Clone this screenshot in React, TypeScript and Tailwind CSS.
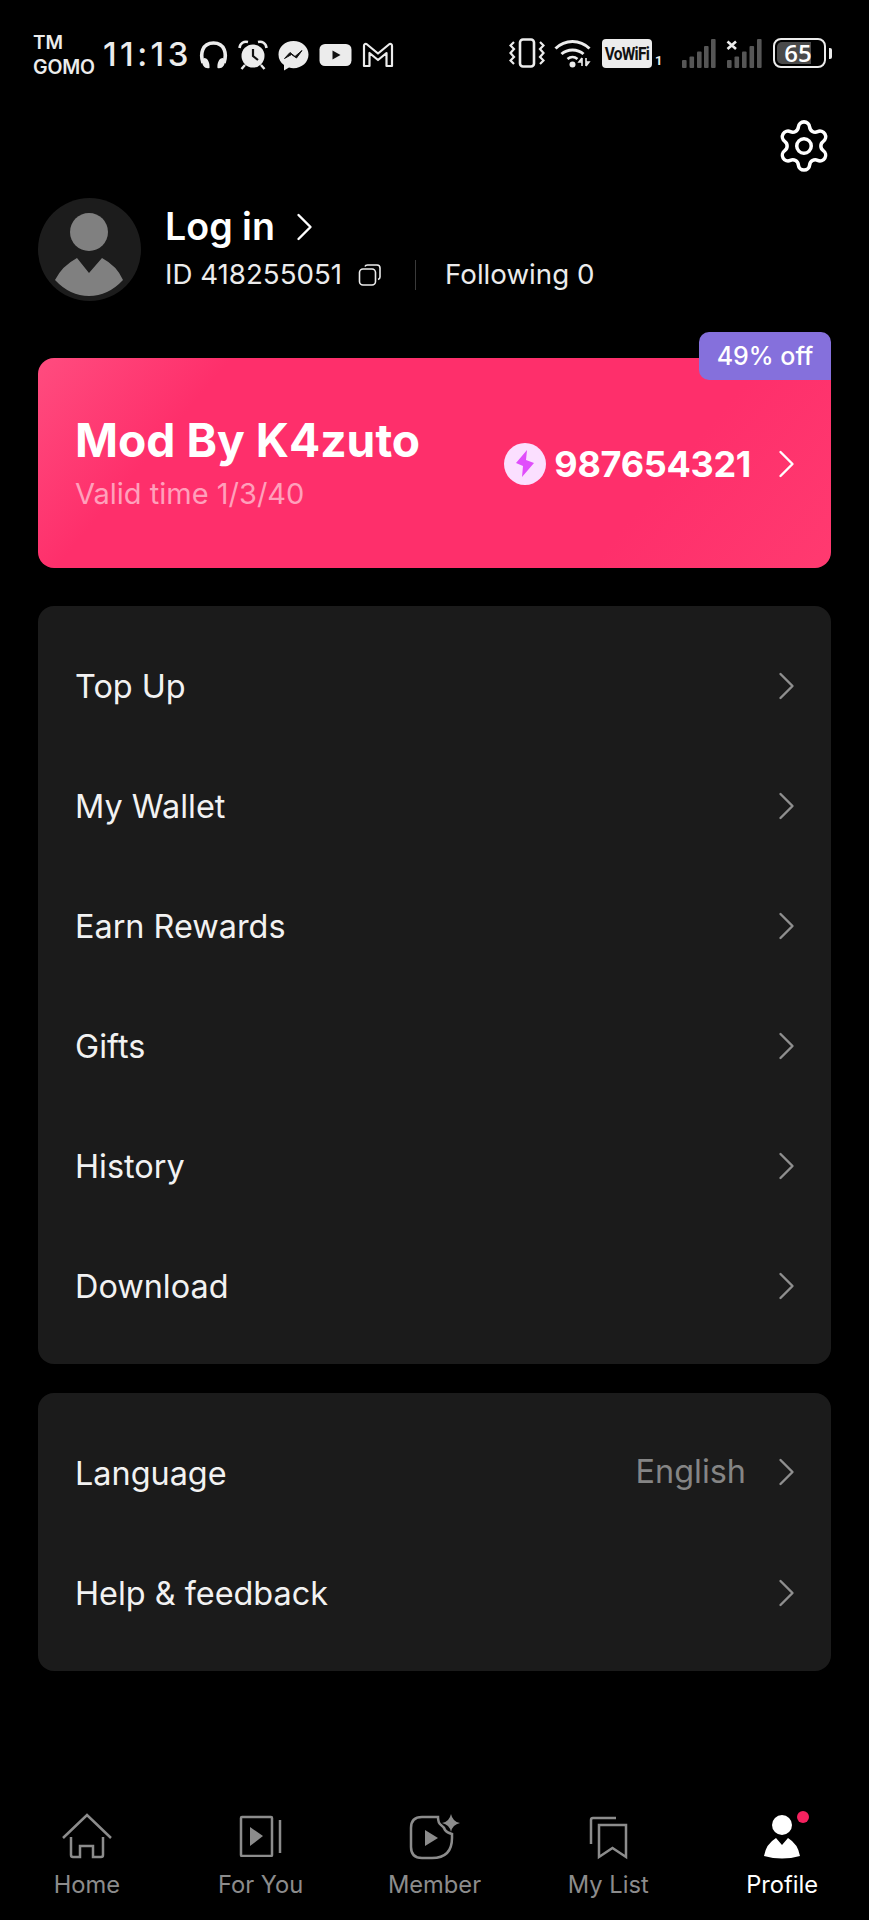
import { Settings } from "lucide-react";
import type { ReactNode } from "react";

const FONT = "font-['Inter','Noto_Sans',sans-serif]";

const MENU_ONE = ["Top Up", "My Wallet", "Earn Rewards", "Gifts", "History", "Download"];

function Chevron({ className = "text-[#8f8f8f]" }: { className?: string }) {
    return (
        <svg width="17" height="28" viewBox="0 0 17 28" fill="none" className={className}>
            <path d="M2.5 2 L14.5 14 L2.5 26" stroke="currentColor" strokeWidth="2.4" strokeLinecap="round" strokeLinejoin="round" />
        </svg>
    );
}

function MenuRow({ label, value }: { label: string; value?: string }) {
    return (
        <div className="h-[120px] pl-[38px] pr-[36px] flex items-center justify-between">
            <span className="text-[32.4px] text-[#f2f2f2] -ml-[1px]">{label}</span>
            <div className="flex items-center gap-[32px] -mt-[3px]">
                {value && <span className="text-[32.4px] text-[#858585]">{value}</span>}
                <Chevron />
            </div>
        </div>
    );
}

function StatusLeftIcons() {
    return (
        <div className="flex items-center gap-[10px] text-[#ececec]">
            {/* headphones */}
            <svg width="29" height="30" viewBox="0 0 29 30" fill="none">
                <path d="M4 23 C1 14 3 3 14.5 3 C26 3 28 14 25 23" stroke="currentColor" strokeWidth="3.6" />
                <path d="M5 18 C9 18 11 23 10.5 28 C6 29 3 26 3 20 Z M24 18 C20 18 18 23 18.5 28 C23 29 26 26 26 20 Z" fill="currentColor" />
            </svg>
            {/* alarm */}
            <svg width="30" height="30" viewBox="0 0 30 30" fill="none">
                <circle cx="15" cy="16" r="11.5" fill="currentColor" />
                <path d="M15 9 V16 L20 20" stroke="#111" strokeWidth="2.2" />
                <path d="M1.5 8 C2 3 6 1 10 2 M28.5 8 C28 3 24 1 20 2" stroke="currentColor" strokeWidth="2.6" />
                <path d="M7 25 L3.5 29 M23 25 L26.5 29" stroke="currentColor" strokeWidth="2.4" />
            </svg>
            {/* messenger */}
            <svg width="31" height="31" viewBox="0 0 31 31" fill="none">
                <path d="M15.5 1 C7 1 0.5 7 0.5 14.5 C0.5 19 2.5 22.5 6 25 V30.5 L11 27.5 C12.5 28 14 28.2 15.5 28.2 C24 28.2 30.5 22 30.5 14.5 C30.5 7 24 1 15.5 1 Z" fill="currentColor" />
                <path d="M6.5 18.5 L12 12.5 L17 16.5 L24 10.5 L18.5 18 L13.5 14.5 Z" fill="#111" stroke="#111" strokeWidth="1" />
            </svg>
            {/* youtube */}
            <svg width="33" height="24" viewBox="0 0 33 24" fill="none">
                <rect x="0.5" y="1" width="32" height="22" rx="5.5" fill="currentColor" />
                <path d="M13.5 7.5 L21.5 12 L13.5 16.5 Z" fill="#111" />
            </svg>
            {/* gmail */}
            <svg width="32" height="26" viewBox="0 0 32 26" fill="none">
                <path d="M2 24 V4 Q2 1.5 4.5 2 L16 11.5 L27.5 2 Q30 1.5 30 4 V24 H24.5 V11 L16 18 L7.5 11 V24 Z" stroke="currentColor" strokeWidth="2.2" strokeLinejoin="round" />
            </svg>
        </div>
    );
}

function SignalBars({ xs, crossed }: { xs: number[]; crossed?: boolean }) {
    const tops = [22, 18.5, 13.5, 8, 1];
    return (
        <svg width="36" height="30" viewBox="0 0 36 30" fill="#565656">
            {xs.map((x, i) => (
                <rect key={x} x={x} y={tops[i]} width="4.6" height={30 - tops[i]} rx="1" />
            ))}
            {crossed && <path d="M1.5 3.5 L10 11 M10 3.5 L1.5 11" stroke="#ececec" strokeWidth="2.6" />}
        </svg>
    );
}

function StatusRightIcons() {
    return (
        <div className="flex items-center text-[#ececec]">
            {/* vibrate */}
            <svg width="36" height="30" viewBox="0 0 36 30" fill="none" className="mr-[9px]">
                <rect x="11" y="1.5" width="14" height="27" rx="3" stroke="currentColor" strokeWidth="2.6" />
                <path d="M5 4 L1.5 7.5 L5 11 L1.5 15 L5 19 L1.5 22.5 L5 26 M31 4 L34.5 7.5 L31 11 L34.5 15 L31 19 L34.5 22.5 L31 26" stroke="currentColor" strokeWidth="2.2" />
            </svg>
            {/* wifi */}
            <svg width="38" height="30" viewBox="0 0 38 30" fill="none" className="mr-[10px]">
                <path d="M1.5 10.5 C11 1 26 1 35.5 10.5" stroke="currentColor" strokeWidth="3" />
                <path d="M7.5 16 C13.5 10.5 23.5 10.5 29.5 16" stroke="currentColor" strokeWidth="3" />
                <path d="M13.5 21 C16.5 18.5 20.5 18.5 23.5 21" stroke="currentColor" strokeWidth="2.6" />
                <circle cx="18.5" cy="26.5" r="3" fill="currentColor" />
                <path d="M28 20 V28 M28 20 L25 24 H28 M32 28 V20 M32 28 L35 24 H32" stroke="currentColor" strokeWidth="1.6" />
            </svg>
            <div className="w-[50px] h-[29px] rounded-[4px] bg-[#ececec] flex items-center justify-center overflow-hidden">
                <span className="font-['Roboto',sans-serif] font-bold text-[18px] text-[#111] tracking-[-0.8px] scale-x-[0.86] whitespace-nowrap">VoWiFi</span>
            </div>
            <span className="font-['Roboto',sans-serif] font-bold text-[13px] self-end ml-[3px] w-[26px] leading-[14px]">1</span>
            <div className="mr-[9px]"><SignalBars xs={[1, 8.5, 16, 23, 30]} /></div>
            <div className="mr-[11px]"><SignalBars xs={[1, 8.5, 16, 23.5, 31]} crossed /></div>
            {/* battery */}
            <div className="relative w-[53px] h-[30px] rounded-[8px] border-2 border-[#ececec] flex items-center justify-center">
                <div className="absolute left-[2px] top-[2px] bottom-[2px] w-[34px] rounded-l-[5px] bg-[#4a4a4a]" />
                <span className="relative font-['Open_Sans',sans-serif] font-semibold text-[24px] leading-none text-white -ml-[3px]">65</span>
            </div>
            <div className="w-[3px] h-[11px] ml-[3px] rounded-r-[2px] bg-[#ececec]" />
        </div>
    );
}

function StatusBar() {
    return (
        <div className="h-[110px] pt-[30px] pl-[33px] pr-[37px] flex items-start justify-between">
            <div className="flex items-center h-[50px]">
                <div className="w-[70px] flex flex-col text-[#ececec] font-semibold">
                    <span className="text-[19px] leading-[24px]">TM</span>
                    <span className="text-[19.5px] leading-[24px] tracking-[-0.2px]">GOMO</span>
                </div>
                <span className="text-[33px] font-medium text-[#ececec] tracking-[3.4px] w-[96px]">11:13</span>
                <StatusLeftIcons />
            </div>
            <div className="h-[50px] flex items-center -mt-[2px]">
                <StatusRightIcons />
            </div>
        </div>
    );
}

function Avatar() {
    return (
        <svg width="103" height="103" viewBox="0 0 103 103" className="shrink-0">
            <circle cx="51.5" cy="51.5" r="51.5" fill="#1c1c1c" />
            <circle cx="51" cy="34" r="19" fill="#808080" />
            <path d="M17 82 Q24 68 39 60 L51 75 L64 60 Q79 68 85 82 Q70 98 51 98 Q32 98 17 82 Z" fill="#808080" />
        </svg>
    );
}

function ProfileHeader() {
    return (
        <div className="flex items-center gap-[24px]">
            <Avatar />
            <div className="flex flex-col pt-[2px]">
                <div className="flex items-center h-[48px] gap-[21px]">
                    <span className="text-[37.6px] font-semibold text-white">Log in</span>
                    <Chevron className="text-white" />
                </div>
                <div className="flex items-center h-[46px] mt-[1px] text-[27.7px] text-[#ececec]">
                    <span>ID 418255051</span>
                    <svg width="24" height="24" viewBox="0 0 24 24" fill="none" className="ml-[16px]">
                        <rect x="1.5" y="6" width="16" height="16" rx="3.5" stroke="currentColor" strokeWidth="1.6" />
                        <path d="M7 3.5 Q7.5 2 9.5 2 H19 Q22 2 22 5 V14 Q22 16 20 16.5" stroke="currentColor" strokeWidth="1.6" />
                    </svg>
                    <div className="w-px h-[30px] bg-[#3a3a3a] ml-[33px] mr-[29px]" />
                    <span>Following 0</span>
                </div>
            </div>
        </div>
    );
}

function VipCard() {
    return (
        <div className="relative h-[210px] mt-[57px] rounded-[16px] pl-[37px] pr-[36px] flex items-center justify-between bg-[linear-gradient(130deg,#ff4c7f_0%,#fe2f6b_20%,#fe2f6b_75%,#ff3a70_100%)]">
            <div className="absolute -top-[26px] right-0 w-[132px] h-[48px] rounded-t-[10px] rounded-bl-[10px] bg-[#8570dc] flex items-center justify-center text-[25px] font-medium text-white pt-[1px]">
                49% off
            </div>
            <div className="flex flex-col -mt-[2px]">
                <span className="text-[46.2px] leading-[54px] font-bold text-white">Mod By K4zuto</span>
                <span className="text-[29px] leading-[36px] text-[#ffa0bb] mt-[9px]">Valid time 1/3/40</span>
            </div>
            <div className="flex items-center mt-[1px]">
                <div className="w-[42px] h-[42px] rounded-full bg-[#fbdfff] flex items-center justify-center">
                    <svg width="20" height="29" viewBox="0 0 20 29">
                        <path d="M12 1 L1 14 L8 17 L7 28 L19 14 L11 11 Z" fill="#e04dfb" />
                    </svg>
                </div>
                <span className="ml-[8px] text-[36px] font-bold text-white tracking-[-0.3px]">987654321</span>
                <div className="ml-[27px] flex"><Chevron className="text-white" /></div>
            </div>
        </div>
    );
}

function NavItem({ label, active, icon }: { label: string; active?: boolean; icon: ReactNode }) {
    return (
        <div className={`flex flex-col items-center ${active ? "text-white" : "text-[#8c8c8c]"}`}>
            <div className="h-[52px] flex items-center justify-center">{icon}</div>
            <span className="text-[23.7px] leading-[30px] mt-[8px]">{label}</span>
        </div>
    );
}

function BottomNav() {
    return (
        <div className="grid grid-cols-5 h-[110px]">
            <NavItem
                label="Home"
                icon={
                    <svg width="50" height="46" viewBox="0 0 50 46" fill="none" stroke="currentColor" strokeWidth="2.5">
                        <path d="M1 25 L25 2 L49 25" />
                        <path d="M9 24 V42 Q9 44 11 44 H18 V33 H31 V44 H39 Q41 44 41 42 V24" />
                    </svg>
                }
            />
            <NavItem
                label="For You"
                icon={
                    <svg width="44" height="42" viewBox="0 0 44 42" fill="none" stroke="currentColor" strokeWidth="2.5">
                        <rect x="2" y="2" width="31" height="39" rx="1" />
                        <path d="M41 5 V38" />
                        <path d="M11 12 L24 21 L11 31 Z" fill="currentColor" stroke="none" />
                    </svg>
                }
            />
            <NavItem
                label="Member"
                icon={
                    <svg width="56" height="52" viewBox="0 0 56 52" fill="none" stroke="currentColor" strokeWidth="2.5" className="relative left-[2px]">
                        <path d="M30 7 Q30 13 33 15 Q36 17 37 20 Q39 23 44 24 V28 Q44 48 24 48 H14 Q3 48 3 37 V18 Q3 7 14 7 Z" />
                        <path d="M43 4 Q44.5 11.5 52 13 Q44.5 14.5 43 22 Q41.5 14.5 34 13 Q41.5 11.5 43 4 Z" fill="currentColor" stroke="none" />
                        <path d="M17 20 L30 28 L17 36 Z" fill="currentColor" stroke="none" />
                    </svg>
                }
            />
            <NavItem
                label="My List"
                icon={
                    <svg width="46" height="52" viewBox="0 0 46 52" fill="none" stroke="currentColor" strokeWidth="2.5">
                        <path d="M6 34 V10 Q6 8 8 8 H31" />
                        <path d="M14 15 H41 V47 L27.5 38 L14 47 Z" />
                    </svg>
                }
            />
            <NavItem
                label="Profile"
                active
                icon={
                    <svg width="46" height="52" viewBox="0 0 46 52" className="relative left-[4px]">
                        <circle cx="19" cy="15" r="10" fill="currentColor" />
                        <path d="M1 46 Q3 34 13 28 L19 35 L25 28 Q35 34 37 46 Q19 51 1 46 Z" fill="currentColor" />
                        <circle cx="40" cy="7" r="6" fill="#f5225f" />
                    </svg>
                }
            />
        </div>
    );
}

export default function App() {
    return (
        <div className={`${FONT} h-[1920px] w-[869px] bg-black flex flex-col justify-between overflow-hidden`}>
            <div>
                <StatusBar />
                <div className="h-[60px] flex items-center justify-end pr-[36px] mt-[6px] text-white">
                    <Settings size={58} strokeWidth={1.45} />
                </div>
                <div className="px-[38px] mt-[22px]">
                    <ProfileHeader />
                    <VipCard />
                    <div className="mt-[38px] pt-[21px] pb-[17px] rounded-[16px] bg-[#1b1b1b]">
                        {MENU_ONE.map((label) => (
                            <MenuRow key={label} label={label} />
                        ))}
                    </div>
                    <div className="mt-[29px] pt-[21px] pb-[17px] rounded-[16px] bg-[#1b1b1b]">
                        <MenuRow label="Language" value="English" />
                        <MenuRow label="Help & feedback" />
                    </div>
                </div>
            </div>
            <BottomNav />
        </div>
    );
}
